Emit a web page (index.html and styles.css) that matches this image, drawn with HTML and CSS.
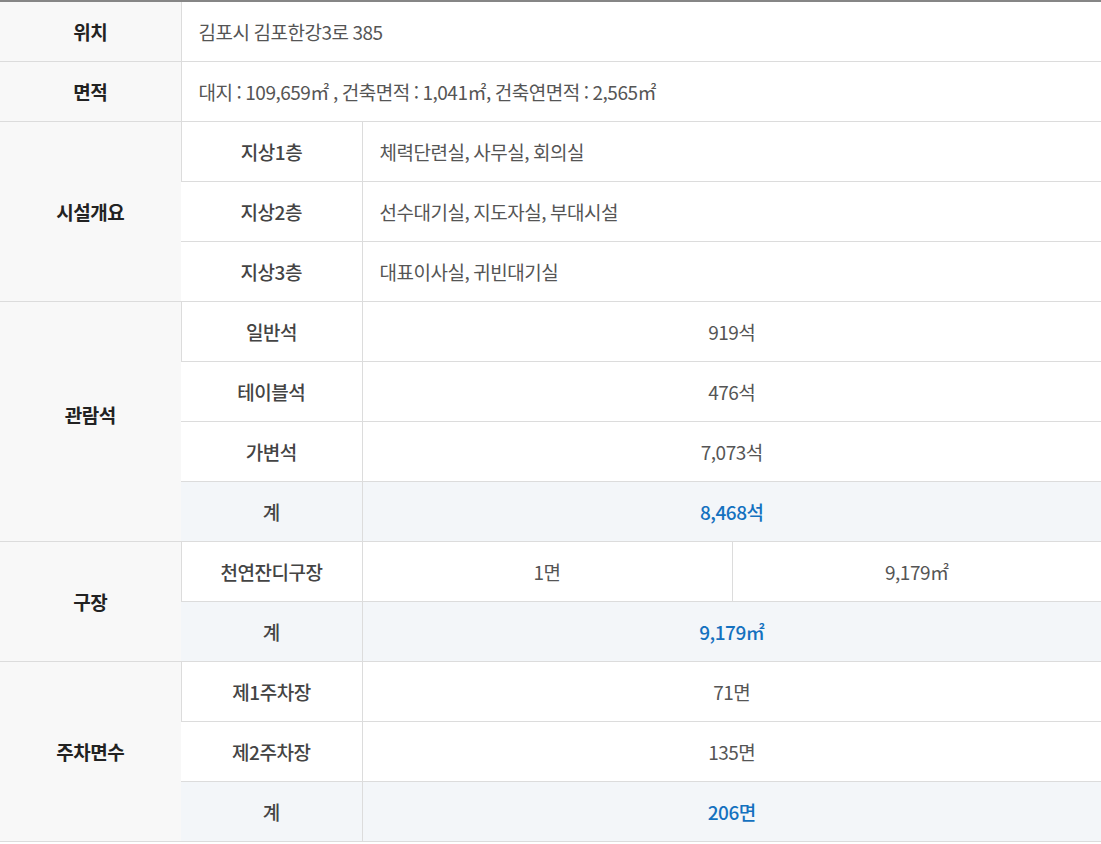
FILE: index.html
```html
<!DOCTYPE html>
<html lang="ko">
<head>
<meta charset="utf-8">
<link rel="stylesheet" href="styles.css">
</head>
<body>
<table class="info">
  <colgroup>
    <col class="c1"><col class="c2"><col class="c3"><col class="c4">
  </colgroup>
  <tbody>
    <tr>
      <th class="head">위치</th>
      <td class="left" colspan="3">김포시 김포한강3로 385</td>
    </tr>
    <tr>
      <th class="head">면적</th>
      <td class="left" colspan="3">대지 : 109,659㎡ , 건축면적 : 1,041㎡, 건축연면적 : 2,565㎡</td>
    </tr>
    <tr>
      <th class="head" rowspan="3">시설개요</th>
      <th class="sub">지상1층</th>
      <td class="left" colspan="2">체력단련실, 사무실, 회의실</td>
    </tr>
    <tr>
      <th class="sub">지상2층</th>
      <td class="left" colspan="2">선수대기실, 지도자실, 부대시설</td>
    </tr>
    <tr>
      <th class="sub">지상3층</th>
      <td class="left" colspan="2">대표이사실, 귀빈대기실</td>
    </tr>
    <tr>
      <th class="head head-up" rowspan="4">관람석</th>
      <th class="sub">일반석</th>
      <td colspan="2">919석</td>
    </tr>
    <tr>
      <th class="sub">테이블석</th>
      <td colspan="2">476석</td>
    </tr>
    <tr>
      <th class="sub">가변석</th>
      <td colspan="2">7,073석</td>
    </tr>
    <tr class="total">
      <th class="sub">계</th>
      <td colspan="2">8,468석</td>
    </tr>
    <tr>
      <th class="head" rowspan="2">구장</th>
      <th class="sub">천연잔디구장</th>
      <td>1면</td>
      <td>9,179㎡</td>
    </tr>
    <tr class="total">
      <th class="sub">계</th>
      <td colspan="2">9,179㎡</td>
    </tr>
    <tr>
      <th class="head" rowspan="3">주차면수</th>
      <th class="sub">제1주차장</th>
      <td colspan="2">71면</td>
    </tr>
    <tr>
      <th class="sub">제2주차장</th>
      <td colspan="2">135면</td>
    </tr>
    <tr class="total">
      <th class="sub">계</th>
      <td colspan="2">206면</td>
    </tr>
  </tbody>
</table>
</body>
</html>
```
FILE: styles.css
```css
html, body {
  margin: 0;
  padding: 0;
  background: #fff;
}
body {
  font-family: "Noto Sans CJK KR", "Noto Sans", sans-serif;
  font-size: 19px;
  letter-spacing: -0.5px;
  word-spacing: -0.8px;
  color: #555;
}
.info {
  width: 1101px;
  border-collapse: collapse;
  table-layout: fixed;
  border-top: 2px solid #868686;
}
.c1 { width: 181px; }
.c2 { width: 181px; }
.c3 { width: 370px; }
.c4 { width: 369px; }
.info th,
.info td {
  height: 59px;
  padding: 0;
  border-bottom: 1px solid #dcdcdc;
  border-left: 1px solid #dcdcdc;
  text-align: center;
  vertical-align: middle;
  line-height: 26px;
}
.info tr > :first-child {
  border-left: none;
}
.info .head {
  background: #f8f8f8;
  color: #222;
  font-weight: 700;
}
.info .head-up {
  padding-bottom: 14px;
}
.info th.head + td,
.info th.head + th {
  border-left: 1px solid #dcdcdc;
}
.info .sub {
  color: #444;
  font-weight: 500;
}
.info td.left {
  text-align: left;
  padding-left: 17px;
}
.info .total th,
.info .total td {
  background: #f3f6f9;
}
.info .total td {
  color: #1471bf;
  font-weight: 500;
}
.info .total th.sub {
  border-left: none;
}
```
